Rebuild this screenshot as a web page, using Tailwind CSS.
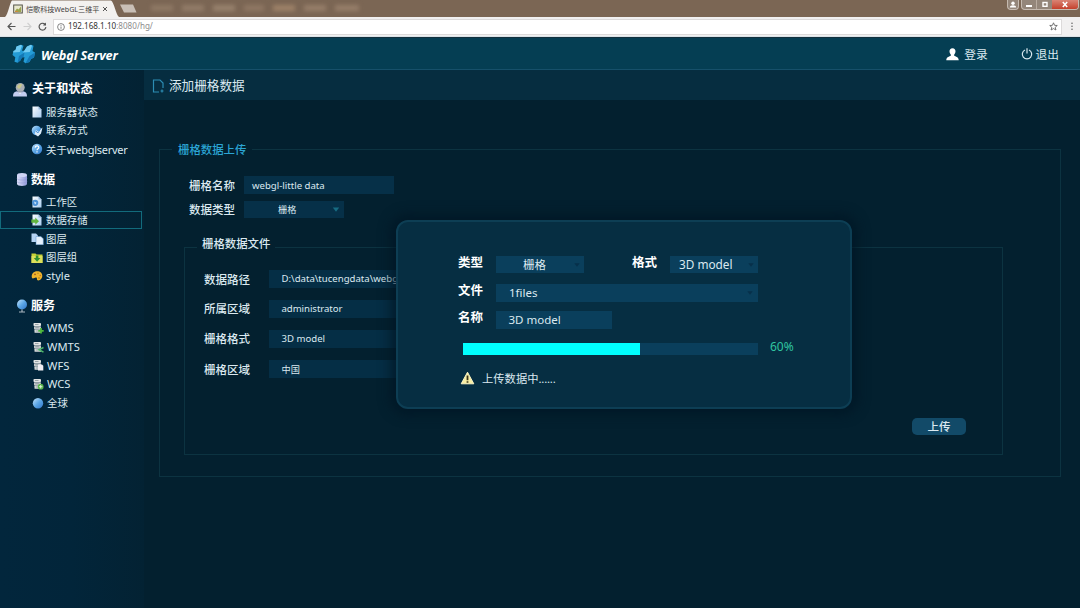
<!DOCTYPE html>
<html lang="zh-CN">
<head>
  <meta charset="UTF-8" />
  <title>Webgl Server - 添加栅格数据</title>
  <meta name="viewport" content="width=device-width, initial-scale=1.0" />
  <script src="https://cdn.jsdelivr.net/npm/@tailwindcss/browser@4"></script>
</head>
<body class="relative w-[1080px] h-[608px] overflow-hidden flex flex-col bg-[#03202f] text-[#dbe9f0] leading-none font-['Noto_Sans','Noto_Sans_CJK_SC',sans-serif]">

  <!-- shared icons -->
  <svg class="absolute w-0 h-0">
    <defs>
      <linearGradient id="ball" x1="0" y1="0" x2="1" y2="1">
        <stop offset="0" stop-color="#c3e2fb" /><stop offset=".5" stop-color="#5ba6e6" /><stop offset="1" stop-color="#2f74c8" />
      </linearGradient>
      <linearGradient id="paper" x1="0" y1="0" x2="1" y2="1">
        <stop offset="0" stop-color="#fbfdff" /><stop offset="1" stop-color="#a9cdf0" />
      </linearGradient>
      <linearGradient id="drum" x1="0" y1="0" x2="1" y2="0">
        <stop offset="0" stop-color="#dde0fa" /><stop offset="1" stop-color="#8f97d8" />
      </linearGradient>
    </defs>
    <symbol id="page" viewBox="0 0 12 12"><path d="M1.500 .5h6l3 3v8h-9z" fill="url(#paper)" /><path d="M7.500 .5v3h3z" fill="#8fb4dc" /></symbol>
    <symbol id="server" viewBox="0 0 12 12">
      <rect x="1.500" y="1" width="7.500" height="3.100" rx=".8" fill="#e2e4e4" /><rect x="2" y="4.300" width="7" height="3.100" rx=".6" fill="#c3c8ca" /><rect x="2.500" y="7.600" width="6.500" height="3.200" rx=".6" fill="#dadddd" />
      <path d="M3 2.500h3.500M3.300 5.700h3.500M3.800 9h3" stroke="#7d898f" stroke-width=".7" />
    </symbol>
  </svg>

  <!-- browser tabs -->
  <div class="flex h-[17px] shrink-0 bg-[#7b6654]">
    <div class="relative w-[114px] ml-[5px] h-full">
      <svg class="absolute inset-0" width="114" height="17" viewBox="0 0 114 17"><path d="M0 17C3 15 5 2 7 .5H106C109 2 111 15 114 17z" fill="#f3f1ef" /></svg>
      <div class="relative flex items-center h-full pl-2">
        <svg width="10" height="10" viewBox="0 0 10 10"><rect x=".7" y="1" width="8.600" height="8" fill="#e9e8cf" stroke="#55544a" /><path d="M2 7l2-2.500 1.500 1L8 2.500V8H2z" fill="#9aa54d" /><path d="M2 7.500h3" stroke="#cf8a3a" /></svg>
        <span class="ml-[3px] w-[76px] whitespace-nowrap text-[7.100px] leading-[10px] text-[#3f3d3c]">恺歌科技WebGL三维平</span>
        <svg width="6" height="6" viewBox="0 0 6 6"><path d="M1 1l4 4M5 1L1 5" stroke="#555" stroke-width="1" /></svg>
      </div>
    </div>
    <svg class="mt-1" width="20" height="10" viewBox="0 0 20 10"><path d="M1 .5h13l3.500 8H5z" fill="#c9bfb6" /></svg>
    <div class="flex items-center gap-[9px] ml-3 h-[15px] blur-[2px]">
      <span class="w-[22px] h-[6px] bg-[#8f7965]"></span>
      <span class="w-[22px] h-[6px] bg-[#927c68]"></span>
      <span class="w-[22px] h-[6px] bg-[#98826d]"></span>
      <span class="w-[20px] h-[6px] bg-[#8f7763]"></span>
      <span class="w-[22px] h-[6px] bg-[#9e8268]"></span>
      <span class="w-[22px] h-[6px] bg-[#967e69]"></span>
      <span class="w-[24px] h-[6px] bg-[#967e69]"></span>
    </div>
    <div class="flex ml-auto mr-px gap-[2px] h-[10px]">
      <div class="flex w-3 items-center justify-center rounded-b-sm border border-t-0 border-[#c5bab0] bg-[#94867a]"><svg width="8" height="7" viewBox="0 0 8 7"><circle cx="4" cy="2.200" r="1.700" fill="#fff" /><path d="M.8 6.500c0-3 6.400-3 6.400 0z" fill="#fff" /></svg></div>
      <div class="flex rounded-b-sm border border-t-0 border-[#c5bab0] bg-[#94867a] overflow-hidden">
        <div class="flex w-[15px] items-center justify-center border-r border-[#b9aca1]"><svg width="8" height="7" viewBox="0 0 8 7"><path d="M1 5h6" stroke="#fff" stroke-width="1.800" /></svg></div>
        <div class="flex w-[15px] items-center justify-center"><svg width="8" height="7" viewBox="0 0 8 7"><rect x="2" y="1.500" width="4" height="3.800" fill="none" stroke="#fff" stroke-width="1.400" /></svg></div>
        <div class="flex w-[26px] items-center justify-center bg-linear-to-b from-[#d98374] to-[#c43f2b]"><svg width="8" height="7" viewBox="0 0 8 7"><path d="M1.800 1l4.400 5M6.200 1L1.800 6" stroke="#fff" stroke-width="1.500" /></svg></div>
      </div>
    </div>
  </div>

  <!-- address bar -->
  <div class="flex items-center h-[20px] shrink-0 bg-[#f1f0f0] border-b border-[#dbe3e8]">
    <svg class="ml-[7px]" width="9" height="9" viewBox="0 0 9 9" fill="none" stroke="#555" stroke-width="1.100"><path d="M8.500 4.500H1M4.500 1L1 4.500 4.500 8" /></svg>
    <svg class="ml-[7px]" width="9" height="9" viewBox="0 0 9 9" fill="none" stroke="#cfcfcf" stroke-width="1.100"><path d="M.5 4.500H8M4.500 1L8 4.500 4.500 8" /></svg>
    <svg class="ml-[6px]" width="9" height="9" viewBox="0 0 9 9" fill="none" stroke="#555" stroke-width="1.200"><path d="M7.500 3A3.400 3.400 0 1 0 7.900 5.200" /><path d="M8 .5v3H5z" fill="#555" stroke="none" /></svg>
    <div class="flex items-center flex-1 ml-[6px] h-[16px] bg-white border border-[#dcdada] text-[8px] text-[#8d8d8d]">
      <svg class="ml-[3px] mr-[3px]" width="8" height="8" viewBox="0 0 8 8" fill="none" stroke="#666" stroke-width=".8"><circle cx="4" cy="4" r="3.400" /><path d="M4 3.500v2.300M4 2v.8" /></svg>
      <span class="text-[8.100px]"><span class="text-[#333]">192.168.1.10</span>:8080/hg/</span>
      <svg class="ml-auto mr-[3px]" width="9" height="9" viewBox="0 0 10 10" fill="none" stroke="#666" stroke-width="1"><path d="M5 .9l1.200 2.800 3 .2-2.300 2 .8 3L5 7.300 2.300 8.900l.8-3-2.300-2 3-.2z" /></svg>
    </div>
    <svg class="ml-[8px] mr-[6px]" width="4" height="9" viewBox="0 0 4 9" fill="#666"><circle cx="2" cy="1.300" r=".8" /><circle cx="2" cy="4.300" r=".8" /><circle cx="2" cy="7.300" r=".8" /></svg>
  </div>

  <!-- site header -->
  <header class="flex items-center h-[33px] shrink-0 bg-[#053e53] border-t border-t-[#12303d] border-b border-b-[#16506a]">
    <svg class="ml-3" width="24" height="20" viewBox="0 0 24 20">
      <path d="M4.500 2.500L9 .8l2.500 1L10 6.800h2.500L15 2.500l4-1.700 2.500 1L20.500 7l2.500 1.500-1 5-3 1.500-1.500 3-4 1.200-2-1.500 1-4.500H10l-1.500 3-3 2.500-3-1 .8-4.500L.5 11 1.500 7l2-1z" fill="#249cd6" />
      <path d="M4.500 2.500L9 .8l1 1L7.800 8 1.200 8.500 1.500 7l2-1zM15 2.500l4-1.700 1 1L17.800 8 11 8.500z" fill="#6fcaf1" />
      <path d="M7 12l5.500-3.500-1 5H10l-1.500 3-3 2.500zM17.500 12L23 8.500l-1 5-3 1.500-1.500 3-4 1.200z" fill="#1479b6" />
    </svg>
    <h1 class="ml-[5px] pt-[3px] text-[12.7px] font-bold italic text-white tracking-[-0.15px]">Webgl Server</h1>
    <div class="flex items-center ml-auto mr-[21px] pt-px text-[11.7px]">
      <svg class="mr-[5px]" width="13" height="13" viewBox="0 0 13 13" fill="#fff"><path d="M6.500 .3c2 0 3.100 1.400 3 3.300-.1 1.500-.7 2.400-1.300 3v1.200c1.300.8 4.500 1.200 4.500 4.400H.3c0-3.200 3.200-3.600 4.500-4.400V6.600c-.6-.6-1.200-1.500-1.300-3-.1-1.900 1-3.300 3-3.300z" /></svg>
      <span class="pt-px">登录</span>
      <svg class="ml-[33px] mr-[3px]" width="12" height="12" viewBox="0 0 12 12" fill="none" stroke="#dbe9f0" stroke-width="1.200"><path d="M4 2a4.700 4.700 0 1 0 4 0M6 .3v5.200" /></svg>
      <span class="pt-px">退出</span>
    </div>
  </header>

  <div class="flex flex-1 min-h-0">
    <!-- sidebar -->
    <nav class="w-[144px] shrink-0 pt-[6.500px] bg-linear-to-r from-[#02263c] via-[#02253a] to-[#032233] text-[10.4px]">
      <h2 class="flex items-center h-[26px] pl-3 gap-[4px] text-[12.1px] font-bold text-white">
        <svg width="16" height="16" viewBox="0 0 16 16"><path d="M1 14.500C1 9.500 4 9 8 9s7 .5 7 5.500z" fill="#c3cdf0" /><path d="M5 9l3 3 3-3z" fill="#fff" /><circle cx="8.200" cy="5.500" r="4.500" fill="#a9aeb4" /><path d="M5 5c1-3 4-3.500 5-2.500L9 5 7 7z" fill="#c9c78c" /><path d="M5 9.300c1.500 1 5 1 6.500 0" stroke="#7d87a5" fill="none" /></svg>
        关于和状态
      </h2>
      <ul>
        <li class="flex items-center h-[18.7px] pl-[31px] gap-[3px]"><svg width="12" height="12"><use href="#page" /></svg>服务器状态</li>
        <li class="flex items-center h-[18.7px] pl-[31px] gap-[3px]"><svg width="12" height="12" viewBox="0 0 12 12"><circle cx="5.500" cy="5.500" r="4.800" fill="url(#ball)" /><path d="M5 5l2 1.500 4.500-4L10 8.500 7 11.500 3.500 9z" fill="#dcebf8" /><path d="M5 6l1.800 2L9.500 4" fill="none" stroke="#3d8bd4" stroke-width=".9" /></svg>联系方式</li>
        <li class="flex items-center h-[18.7px] pl-[31px] gap-[3px]"><svg width="12" height="12" viewBox="0 0 12 12"><circle cx="6" cy="6" r="5.200" fill="url(#ball)" /><path d="M4.200 4.600c.2-2.400 3.800-2.200 3.600 0C7.700 5.700 6 5.800 6 7.200M6 8.300v1.200" fill="none" stroke="#fff" stroke-width="1.200" /></svg><span>关于<span class="text-[11px] tracking-[-0.25px]">webglserver</span></span></li>
      </ul>

      <h2 class="flex items-center h-[26px] mt-2 pl-[16px] gap-[3px] text-[12.1px] font-bold text-white">
        <svg width="12" height="15" viewBox="0 0 12 15"><path d="M1 3v9c0 2.500 10 2.500 10 0V3z" fill="url(#drum)" /><ellipse cx="6" cy="3" rx="5" ry="2" fill="#cfd4f6" /><path d="M1 6.500c0 2 10 2 10 0M1 9.500c0 2 10 2 10 0" stroke="#8f96d0" stroke-width=".5" fill="none" /></svg>
        数据
      </h2>
      <ul>
        <li class="flex items-center h-[18.7px] pl-[31px] gap-[3px]"><svg width="12" height="12" viewBox="0 0 12 12"><use href="#page" /><circle cx="4.200" cy="6.800" r="3.100" fill="#4b91d6" /><path d="M3 5.500l2.500 1.200L4 8.500z" fill="#d9ecfb" /></svg>工作区</li>
        <li class="flex items-center w-[142px] h-[18px] pl-[30px] gap-[3px] border border-[#126b7c]"><svg width="12" height="12" viewBox="0 0 12 12"><use href="#page" /><path d="M.3 5.500h4v-2L8 7.300l-3.700 3.500v-2h-4z" fill="#62b53e" /></svg>数据存储</li>
        <li class="flex items-center h-[19px] pl-[31px] gap-[3px]"><svg width="13" height="12" viewBox="0 0 13 12" class="-mr-px"><path d="M.5.500h4.500l2 2V9H.5z" fill="#b5d3f3" /><path d="M5 3.500h5l2.300 2.300v6H5z" fill="#e5f1fd" stroke="#5b92cb" stroke-width=".5" /></svg>图层</li>
        <li class="flex items-center h-[18.7px] pl-[31px] gap-[3px]"><svg width="12" height="12" viewBox="0 0 12 12"><path d="M.5 1.500h4l1 1h6v8.500H.5z" fill="#c7d336" /><path d="M.5 4h11v7H.5z" fill="#dcdf5a" /><path d="M4.800 3.500h2.600V6h2L6.100 9.800 2.800 6h2z" fill="#2e8f2f" /></svg>图层组</li>
        <li class="flex items-center h-[18.7px] pl-[31px] gap-[3px]"><svg width="12" height="12" viewBox="0 0 12 12"><path d="M.7 6.500C.7 3 3.500 1.200 6.300 1.200c3 0 5 2 5 4.600 0 2.500-1.800 4.700-4 4.700-2 0-.7-2.300-2-2.900C4 7 2.500 9 1.300 8.300.9 8 .7 7.200.7 6.500z" fill="#efb52c" /><circle cx="4" cy="4.300" r=".9" fill="#a1571f" /><circle cx="7" cy="3.300" r=".8" fill="#b98820" /><circle cx="9.300" cy="5.500" r=".8" fill="#c97320" /><circle cx="8" cy="8" r=".8" fill="#a87612" /></svg><span class="text-[11px] -mt-px">style</span></li>
      </ul>

      <h2 class="flex items-center h-[26px] mt-[7px] pl-[16px] gap-[3px] text-[12.1px] font-bold text-white">
        <svg width="12" height="14" viewBox="0 0 12 14"><circle cx="6" cy="5.500" r="5" fill="url(#ball)" /><path d="M6 10.500v2M3 13h6" stroke="#a8b4be" stroke-width="1.200" /></svg>
        服务
      </h2>
      <ul>
        <li class="flex items-center h-[18.7px] pl-8 gap-[3px]"><svg width="12" height="12" viewBox="0 0 12 12"><use href="#server" /><path d="M9 6v5.500M6.300 8.800h5.400" stroke="#4fb83c" stroke-width="1.800" /></svg><span class="text-[11.2px]">WMS</span></li>
        <li class="flex items-center h-[18.7px] pl-8 gap-[3px]"><svg width="12" height="12" viewBox="0 0 12 12"><use href="#server" /><path d="M11.500 6.500L7 8.700l4.500 2.500" stroke="#4fb86c" stroke-width="1.500" fill="none" /></svg><span class="text-[11.2px]">WMTS</span></li>
        <li class="flex items-center h-[18.7px] pl-8 gap-[3px]"><svg width="12" height="12" viewBox="0 0 12 12"><use href="#server" /><path d="M6 5.500h4l1.300 1.300V11.500H6z" fill="#f2eff4" /></svg><span class="text-[11.2px]">WFS</span></li>
        <li class="flex items-center h-[18.7px] pl-8 gap-[3px]"><svg width="12" height="12" viewBox="0 0 12 12"><use href="#server" /><circle cx="8.700" cy="8.700" r="2.900" fill="#58b54a" /><path d="M8.700 7v3.400M7 8.700h3.400" stroke="#e9f8e5" stroke-width=".9" /></svg><span class="text-[11.2px]">WCS</span></li>
        <li class="flex items-center h-[18.7px] pl-8 gap-[3px]"><svg width="12" height="12" viewBox="0 0 12 12"><circle cx="6" cy="6.300" r="5.200" fill="url(#ball)" /></svg>全球</li>
      </ul>
    </nav>

    <!-- content -->
    <main class="flex-1 min-w-0">
      <div class="flex items-center h-[30px] pl-[8px] pt-[2px] bg-[#062d40]">
        <svg width="13" height="14" viewBox="0 0 13 14" fill="none" stroke="#2c8db3" stroke-width="1.200"><path d="M7 13H1.500V1H8l3 3v5" /><path d="M10 10.500v3M8.500 12h3" /></svg>
        <span class="ml-1 pt-px text-[12.6px]">添加栅格数据</span>
      </div>

      <fieldset class="w-[902px] h-[336px] mt-[41px] ml-[15px] border border-[#0c3341]">
        <legend class="ml-[12px] px-[6px] h-[16px] leading-[17px] text-[11.4px] font-medium text-[#2ba5d4]">栅格数据上传</legend>
        <div class="flex items-center h-[18px] mt-[19px] pl-[29px]">
          <label class="w-[55px] pt-px text-[11.5px] font-medium">栅格名称</label>
          <div class="flex items-center w-[150px] h-full pl-2 pt-px bg-[#063048] text-[9.6px]">webgl-little data</div>
        </div>
        <div class="flex items-center h-[17px] mt-[7px] pl-[29px]">
          <label class="w-[55px] pt-px text-[11.5px] font-medium">数据类型</label>
          <div class="flex items-center w-[100px] h-full pl-[34px] pr-1 bg-[#063048] text-[9.2px]">
            栅格
            <svg class="ml-auto" width="8" height="5" viewBox="0 0 8 5"><path d="M.8.500h6.400L4 4.700z" fill="#176b82" /></svg>
          </div>
        </div>

        <fieldset class="w-[819px] h-[216px] mt-[21px] ml-[24px] border border-[#0c3341]">
          <legend class="relative -top-1 ml-[12px] px-[5px] h-[16px] leading-[17px] text-[11.4px] font-medium">栅格数据文件</legend>
          <div class="flex flex-col gap-3 mt-[15px] pl-[19px] text-[9.6px]">
            <div class="flex items-center h-[18px]">
              <label class="w-[65px] pt-px text-[11.5px] font-medium">数据路径</label>
              <div class="flex items-center w-[240px] h-full pl-[12.500px] bg-[#052e45]">D:\data\tucengdata\webgl</div>
            </div>
            <div class="flex items-center h-[18px]">
              <label class="w-[65px] text-[11.5px] font-medium">所属区域</label>
              <div class="flex items-center w-[240px] h-full pl-[12.500px] bg-[#052e45] tracking-[-0.05px]">administrator</div>
            </div>
            <div class="flex items-center h-[18px]">
              <label class="w-[65px] text-[11.5px] font-medium">栅格格式</label>
              <div class="flex items-center w-[240px] h-full pl-[12.500px] bg-[#052e45]">3D model</div>
            </div>
            <div class="flex items-center h-[18px]">
              <label class="w-[65px] pt-px text-[11.5px] font-medium">栅格区域</label>
              <div class="flex items-center w-[240px] h-full pl-[12.500px] pt-px bg-[#052e45] text-[9.2px]">中国</div>
            </div>
          </div>
          <div class="flex justify-end mt-[40px] mr-[36px]">
            <button class="w-[54px] h-[17px] pt-px rounded-[5px] bg-[#124a68] text-[11.5px] font-medium leading-none">上传</button>
          </div>
        </fieldset>
      </fieldset>
    </main>
  </div>

  <!-- upload dialog -->
  <div class="absolute left-[396px] top-[220px] w-[456px] h-[189px] rounded-[12px] border-2 border-[#0d3e54] bg-[#062e42] shadow-[0_0_12px_6px_rgba(2,22,35,0.7)] pl-[60px] pt-[34px] text-[11.5px]">
    <div class="flex items-center h-[17px]">
      <label class="w-[38px] -mt-[2px] text-[12.5px] font-bold text-white">类型</label>
      <div class="flex items-center w-[88px] h-full pl-[27px] pr-1 pt-px bg-[#0a3f5c]">栅格<svg class="ml-auto" width="6" height="4" viewBox="0 0 6 4"><path d="M.3.300h5.400L3 3.800z" fill="#07304a" /></svg></div>
      <label class="w-[38px] ml-[48px] -mt-[2px] text-[12.5px] font-bold text-white">格式</label>
      <div class="flex items-center w-[88px] h-full pl-[9px] pr-1 bg-[#0a3f5c] text-[11.8px]">3D model<svg class="ml-auto" width="6" height="4" viewBox="0 0 6 4"><path d="M.3.300h5.400L3 3.800z" fill="#07304a" /></svg></div>
    </div>
    <div class="flex items-center h-[18px] mt-[11px]">
      <label class="w-[38px] -mt-[3px] text-[12.5px] font-bold text-white">文件</label>
      <div class="flex items-center w-[262px] h-full pl-[13px] pr-[5px] bg-[#0a3f5c]">1files<svg class="ml-auto" width="6" height="4" viewBox="0 0 6 4"><path d="M.3.300h5.400L3 3.800z" fill="#07304a" /></svg></div>
    </div>
    <div class="flex items-center h-[18px] mt-[9px]">
      <label class="w-[38px] -mt-[3px] text-[12.5px] font-bold text-white">名称</label>
      <div class="flex items-center w-[116px] h-full pl-[12.500px] bg-[#0a3f5c]">3D model</div>
    </div>
    <div class="flex items-center h-[12px] mt-[14px] ml-[5px]">
      <div class="w-[295px] h-full bg-[#0a3f5c]"><div class="h-full bg-[#00ffff]" style="width: 60%"></div></div>
      <span class="ml-3 -mt-[4px] text-[12px] text-[#2fc4a0]">60%</span>
    </div>
    <div class="flex items-center h-[14px] mt-[16px] ml-[2px]">
      <svg width="15" height="14" viewBox="0 0 15 14"><path d="M7.500 1.200L13.800 12.800H1.200z" fill="#f9f0a4" stroke="#f9f3c6" stroke-width="1" stroke-linejoin="round" /><path d="M7.500 4.500v4.700M7.500 10.200v1.600" stroke="#3a3419" stroke-width="1.800" /></svg>
      <span class="ml-[7px] pt-px text-[11.3px]">上传数据中<span class="tracking-[-0.2px]">......</span></span>
    </div>
  </div>

</body>
</html>
